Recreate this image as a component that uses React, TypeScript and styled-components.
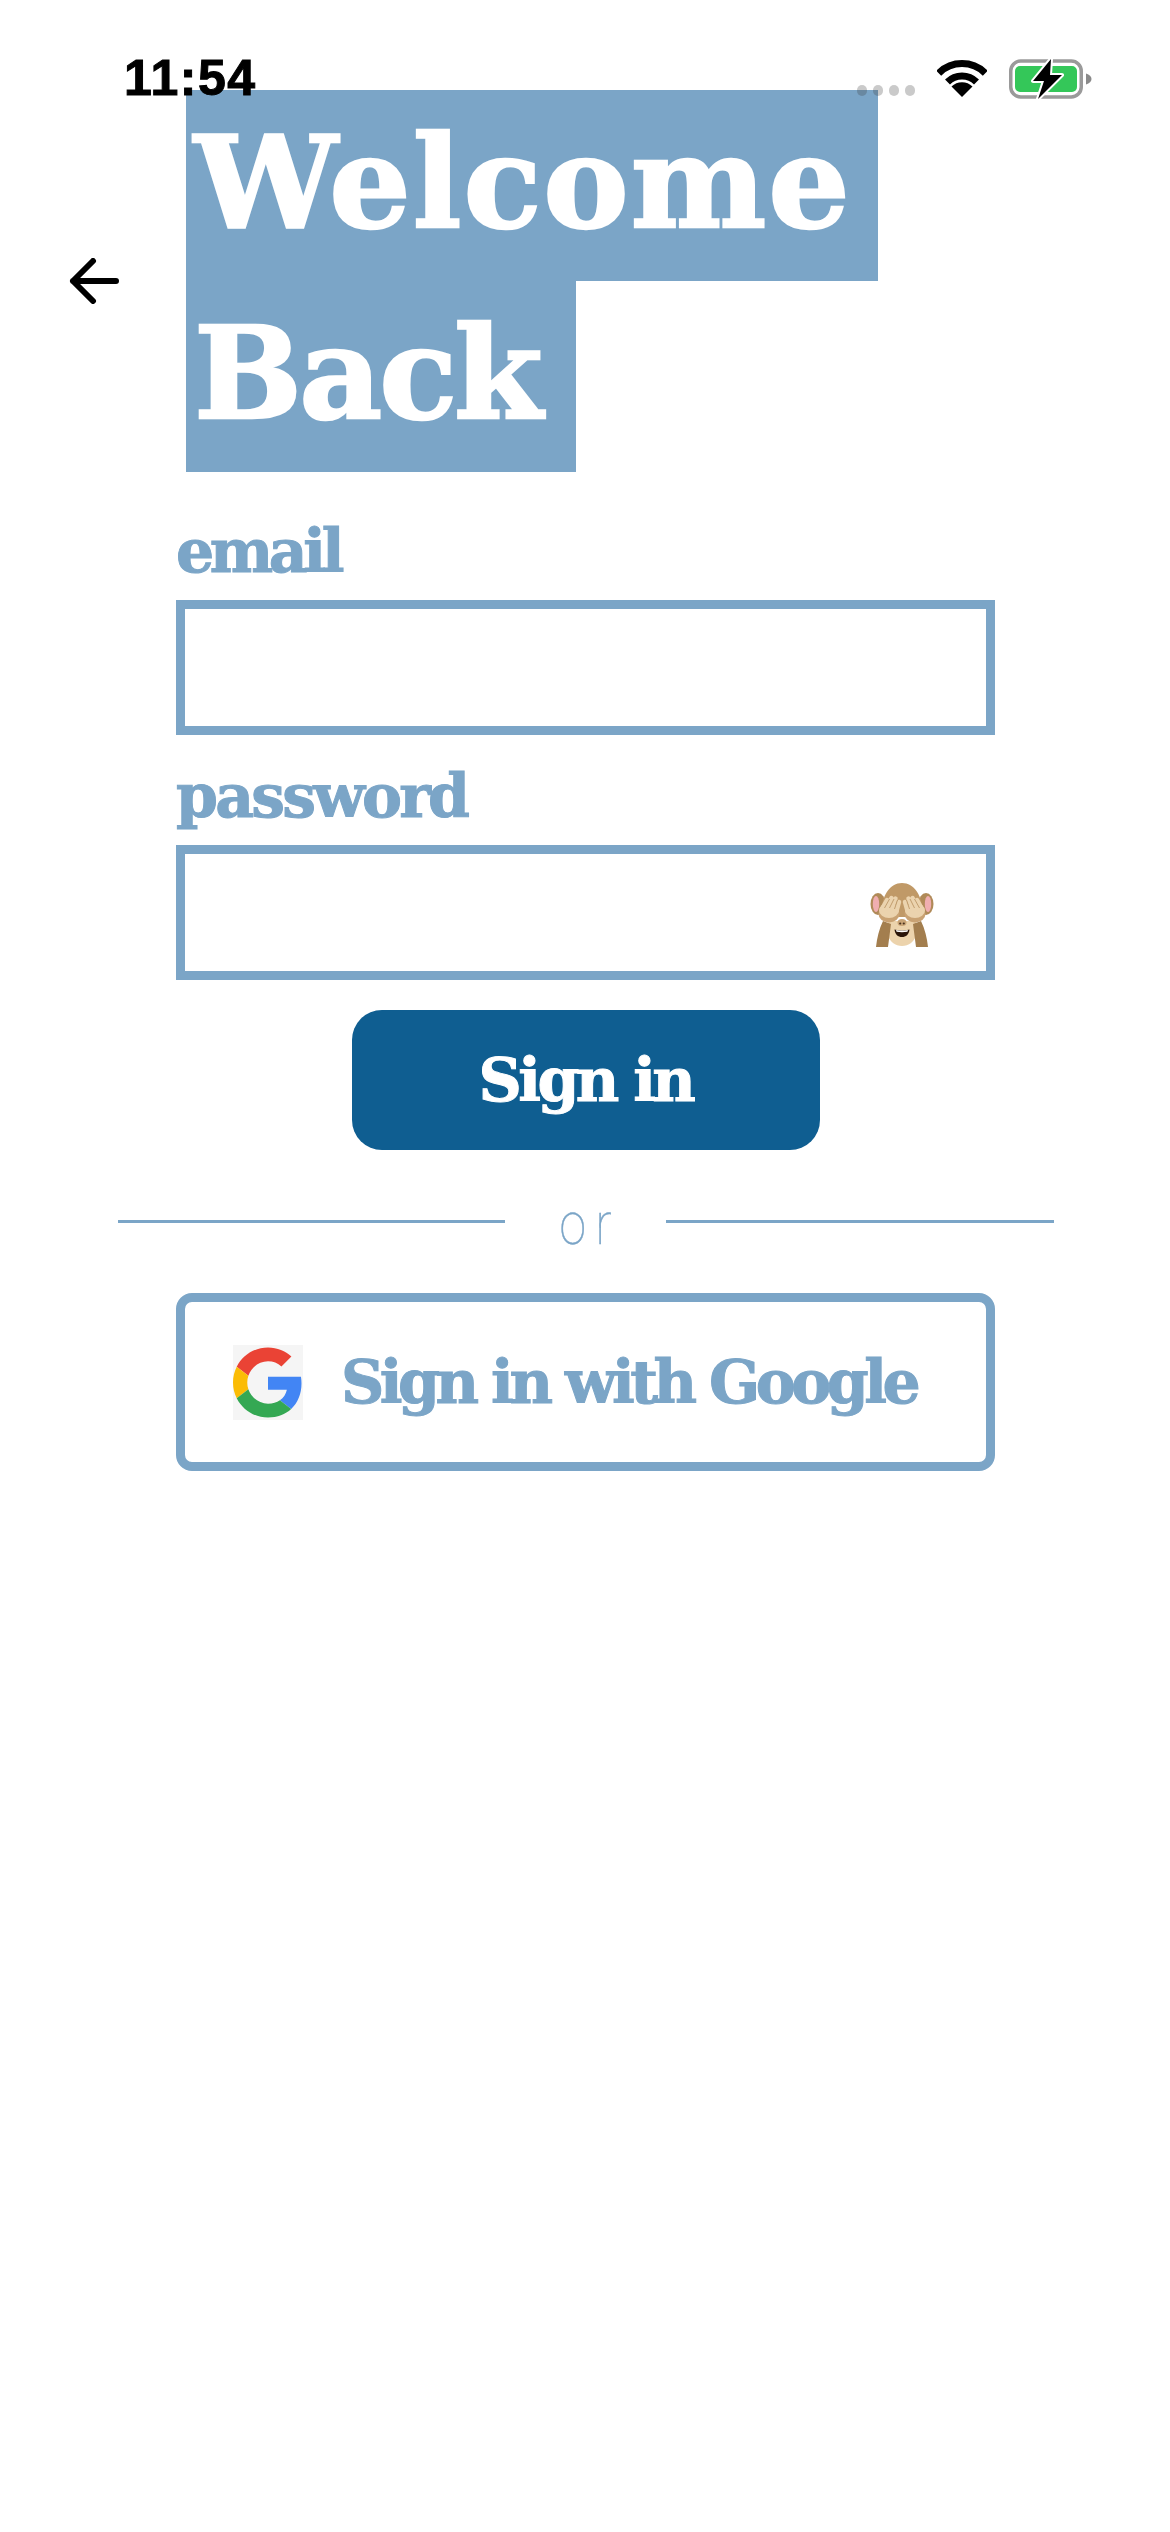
import React from 'react';
import styled, { createGlobalStyle } from 'styled-components';

const blue = '#7ba5c7';
const slab = '"DejaVu Serif", "Liberation Serif", serif';

const GlobalStyle = createGlobalStyle`
  html, body {
    margin: 0;
    padding: 0;
    background: #fff;
  }
`;

const Screen = styled.div`
  position: relative;
  width: 1170px;
  min-height: 2532px;
  padding-top: 90px;
  box-sizing: border-box;
  background: #fff;
  overflow: hidden;
`;

const StatusBar = styled.div`
  position: absolute;
  z-index: 2;
  top: 58px;
  left: 0;
  right: 0;
  height: 41px;
  padding: 0 78px 0 124px;
  display: flex;
  justify-content: space-between;
  align-items: center;
`;

const Clock = styled.span`
  font-family: "Liberation Sans", Arial, sans-serif;
  font-weight: 700;
  font-size: 50px;
  letter-spacing: 1.5px;
  line-height: 41px;
  -webkit-text-stroke: 1px #000;
  color: #000;
`;

const StatusIcons = styled.div`
  display: flex;
  align-items: center;
  gap: 22px;
`;

const SignalDots = styled.div`
  display: flex;
  gap: 6px;
  align-self: flex-end;
  margin-bottom: 3px;
`;

const SignalDot = styled.i`
  display: block;
  width: 10px;
  height: 11px;
  border-radius: 5px;
  background: rgba(60, 60, 60, 0.27);
`;

const Header = styled.header`
  display: flex;
  align-items: center;
  gap: 67px;
  padding-left: 69px;
`;

const BackButton = styled.button`
  display: flex;
  width: 50px;
  padding: 0;
  border: 0;
  background: none;
`;

const Title = styled.h1`
  margin: 0;
  font-family: ${slab};
  font-weight: 700;
  font-size: 128px;
  line-height: 185px;
  color: #fff;
  -webkit-text-stroke: 2.5px #fff;
`;

const TitleLine = styled.span<{ $trail: number; $spacing: number }>`
  display: block;
  width: fit-content;
  height: 191px;
  padding: 0 ${(p) => p.$trail}px 0 8px;
  letter-spacing: ${(p) => p.$spacing}px;
  background: ${blue};
`;

const Form = styled.form`
  display: flex;
  flex-direction: column;
  width: 819px;
  margin: 18px 0 0 176px;
`;

const Label = styled.label<{ $spacing: number }>`
  display: block;
  height: 110px;
  font-family: ${slab};
  font-weight: 700;
  font-size: 60px;
  line-height: 122px;
  letter-spacing: ${(p) => p.$spacing}px;
  -webkit-text-stroke: 1px ${blue};
  color: ${blue};
`;

const InputWrap = styled.div`
  position: relative;
`;

const TextInput = styled.input`
  display: block;
  width: 100%;
  height: 135px;
  box-sizing: border-box;
  border: 9px solid ${blue};
  border-radius: 0;
  background: #fff;
  outline: none;
`;

const Monkey = styled.svg`
  position: absolute;
  top: 38px;
  right: 61px;
  width: 64px;
  height: 64px;
`;

const SignInButton = styled.button`
  align-self: center;
  width: 468px;
  height: 140px;
  margin-top: 30px;
  border: 0;
  border-radius: 30px;
  background: #0f5e91;
  color: #fff;
  font-family: ${slab};
  font-weight: 700;
  font-size: 60px;
  letter-spacing: -3.6px;
  -webkit-text-stroke: 1px #fff;
`;

const Divider = styled.div`
  align-self: center;
  display: flex;
  align-items: center;
  width: 936px;
  height: 60px;
  margin-top: 41px;
`;

const Rule = styled.div`
  flex: 1;
  height: 3px;
  background: ${blue};
`;

const OrLabel = styled.span`
  width: 161px;
  text-align: center;
  font-family: Roboto, sans-serif;
  font-weight: 100;
  font-size: 60px;
  line-height: 60px;
  letter-spacing: 12px;
  text-indent: 12px;
  color: ${blue};
  -webkit-text-stroke: 0.5px ${blue};
  transform: translateY(3px) scaleX(0.8);
`;

const GoogleButton = styled.button`
  display: flex;
  align-items: center;
  gap: 38px;
  width: 100%;
  height: 178px;
  margin-top: 42px;
  padding: 0 0 0 48px;
  box-sizing: border-box;
  border: 9px solid ${blue};
  border-radius: 16px;
  background: #fff;
  color: ${blue};
  font-family: ${slab};
  font-weight: 700;
  font-size: 60px;
  letter-spacing: -4.5px;
  -webkit-text-stroke: 1px ${blue};
`;

const GoogleMark = styled.svg`
  flex: none;
  width: 70px;
  height: 75px;
  background: #f5f5f5;
`;

const WifiIcon = () => (
  <svg width="50" height="37" viewBox="0 0 50 37">
    <path d="M1.7 13.2A33 33 0 0 1 48.3 13.2" fill="none" stroke="#000" strokeWidth="7" />
    <path d="M10.500 22A20.500 20.500 0 0 1 39.500 22" fill="none" stroke="#000" strokeWidth="7" />
    <path d="M25 37L14.500 26.500A15 15 0 0 1 35.500 26.500Z" fill="#000" />
  </svg>
);

const BatteryIcon = () => (
  <svg width="83" height="40" viewBox="0 0 83 40">
    <rect x="1.750" y="2" width="70.500" height="36" rx="10" fill="none" stroke="#9a9a9a" strokeWidth="3.500" />
    <rect x="6" y="7" width="62" height="26" rx="5" fill="#34c759" />
    <path d="M77 14.500c3.500 1 5.500 3 5.500 5.500s-2 4.500-5.500 5.500z" fill="#8a8a8a" />
    <path
      d="M42 0L24 22h11l-6 18L53 16H41z"
      fill="#000"
      stroke="#fff"
      strokeWidth="4"
      strokeLinejoin="round"
      paintOrder="stroke"
    />
  </svg>
);

const ArrowIcon = () => (
  <svg width="50" height="46" viewBox="0 0 50 46">
    <path
      d="M47 23H4M24 3L4 23l20 20"
      fill="none"
      stroke="#000"
      strokeWidth="6"
      strokeLinecap="round"
      strokeLinejoin="round"
    />
  </svg>
);

// one side of the monkey, mirrored for the other
const MonkeySide = ({ flip }: { flip?: boolean }) => (
  <g transform={flip ? 'matrix(-1 0 0 1 64 0)' : undefined}>
    <path d="M6 64c1-9 3-18 7-26l8 3c-1 8-2 15-3 23z" fill="#a37e4e" />
    <ellipse cx="19" cy="31" rx="10.500" ry="8.500" fill="#c9a273" />
    <ellipse cx="19" cy="27.500" rx="10" ry="7.500" fill="#ebd3ae" />
    <g fill="none" stroke="#ebd3ae" strokeWidth="4.500" strokeLinecap="round">
      <path d="M12 26l5-9" />
      <path d="M17 25l4.500-10" />
      <path d="M22 25l3.500-9.500" />
      <path d="M26.500 28l2.500-9" />
    </g>
    <path d="M14.500 25l5-9M19.500 25l4.500-9M24.500 26l3-9" stroke="#b68f5e" strokeWidth="0.800" fill="none" />
  </g>
);

const MonkeyDrawing = () => (
  <Monkey viewBox="0 0 64 64">
    <ellipse cx="8" cy="21" rx="7.500" ry="11" fill="#b08a58" />
    <ellipse cx="56" cy="21" rx="7.500" ry="11" fill="#b08a58" />
    <ellipse cx="6" cy="21" rx="3.200" ry="8" fill="#f0aeb0" />
    <ellipse cx="58" cy="21" rx="3.200" ry="8" fill="#f0aeb0" />
    <path d="M11 34C11 12 20 0 32 0s21 12 21 34z" fill="#c09967" />
    <path d="M18 38h28c3 8 1 17-5 22-5 4-13 4-18 0-6-5-8-14-5-22z" fill="#ecd3ac" />
    <ellipse cx="32" cy="39.500" rx="4.500" ry="3.500" fill="#c9a476" />
    <circle cx="30.200" cy="40.500" r="1.100" fill="#4a3320" />
    <circle cx="33.800" cy="40.500" r="1.100" fill="#4a3320" />
    <path d="M24.500 46.500c5 1.200 10 1.200 15 0-.5 5-3.500 7.500-7.500 7.500s-7-2.500-7.500-7.500z" fill="#2a1408" />
    <path d="M26 47c4 .8 8 .8 12 0l-.6 1.800c-3.600.6-7.200.6-10.800 0z" fill="#fff" />
    <MonkeySide />
    <MonkeySide flip />
  </Monkey>
);

const App: React.FC = () => {
  return (
    <Screen>
      <GlobalStyle />
      <StatusBar>
        <Clock>11:54</Clock>
        <StatusIcons>
          <SignalDots>
            <SignalDot />
            <SignalDot />
            <SignalDot />
            <SignalDot />
          </SignalDots>
          <WifiIcon />
          <BatteryIcon />
        </StatusIcons>
      </StatusBar>

      <Header>
        <BackButton type="button" aria-label="Back">
          <ArrowIcon />
        </BackButton>
        <Title>
          <TitleLine $trail={26} $spacing={2}>
            Welcome
          </TitleLine>
          <TitleLine $trail={36} $spacing={-3}>
            Back
          </TitleLine>
        </Title>
      </Header>

      <Form>
        <Label htmlFor="email" $spacing={-4.4}>
          email
        </Label>
        <InputWrap>
          <TextInput id="email" type="email" />
        </InputWrap>
        <Label htmlFor="password" $spacing={-2.8}>
          password
        </Label>
        <InputWrap>
          <TextInput id="password" type="password" />
          <MonkeyDrawing />
        </InputWrap>

        <SignInButton type="button">Sign in</SignInButton>

        <Divider>
          <Rule />
          <OrLabel>or</OrLabel>
          <Rule />
        </Divider>

        <GoogleButton type="button">
          <GoogleMark viewBox="0 0 48 51.400">
            <g transform="translate(0 1.700)">
              <path fill="#ea4335" d="M24 9.500c3.540 0 6.710 1.220 9.210 3.600l6.850-6.850C35.900 2.380 30.470 0 24 0 14.620 0 6.510 5.380 2.560 13.220l7.980 6.190C12.430 13.720 17.740 9.500 24 9.500z" />
              <path fill="#4285f4" d="M46.980 24.550c0-1.570-.15-3.090-.38-4.550H24v9.020h12.940c-.58 2.960-2.260 5.480-4.780 7.180l7.730 6c4.510-4.180 7.090-10.360 7.090-17.650z" />
              <path fill="#fbbc05" d="M10.530 28.590c-.48-1.450-.76-2.990-.76-4.590s.27-3.140.76-4.590l-7.980-6.190C.92 16.460 0 20.120 0 24c0 3.880.92 7.540 2.560 10.780l7.970-6.190z" />
              <path fill="#34a853" d="M24 48c6.480 0 11.930-2.130 15.890-5.810l-7.730-6c-2.150 1.450-4.920 2.300-8.160 2.300-6.260 0-11.570-4.220-13.470-9.910l-7.980 6.190C6.510 42.620 14.620 48 24 48z" />
            </g>
          </GoogleMark>
          Sign in with Google
        </GoogleButton>
      </Form>
    </Screen>
  );
};

export default App;
